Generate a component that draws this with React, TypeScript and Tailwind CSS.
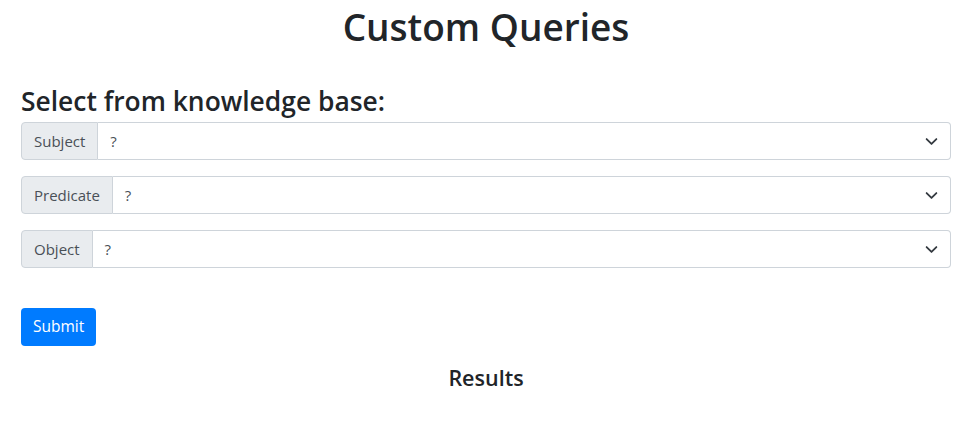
import React from "react";

const font = { fontFamily: '"Open Sans", "Noto Sans", sans-serif' };

function Chevron() {
  return (
    <svg width="13" height="13" viewBox="0 0 16 16" className="shrink-0">
      <path d="M2 5l6 6 6-6" fill="none" stroke="#343a40" strokeWidth="2.2" strokeLinecap="round" strokeLinejoin="round" />
    </svg>
  );
}

function Row({ label, last }: { label: string; last?: boolean }) {
  return (
    <div className={`flex h-[38px] w-full ${last ? "" : "mb-4"}`}>
      <div className="flex items-center px-3 bg-[#e9ecef] border border-[#ced4da] rounded-l-[4px] text-[#495057] text-[15px]">
        {label}
      </div>
      <div className="flex flex-1 items-center justify-between pl-3 pr-[12px] border border-l-0 border-[#ced4da] rounded-r-[4px] text-[#495057] text-[15px] bg-white">
        <span>?</span>
        <Chevron />
      </div>
    </div>
  );
}

export default function App() {
  return (
    <div className="bg-white min-h-[441px] pl-[21px] pr-[16px] text-[#212529]" style={font}>
      <h1 className="text-center text-[37px] font-semibold leading-[48px] pt-[3px]">Custom Queries</h1>
      <h3 className="text-[26.4px] font-semibold leading-[34px] mt-[33px] mb-[4px]">Select from knowledge base:</h3>
      <Row label="Subject" />
      <Row label="Predicate" />
      <Row label="Object" last />
      <button className="mt-10 h-[38px] px-3 bg-[#007bff] text-white text-[15.5px] rounded-[4px]">Submit</button>
      <h5 className="text-center text-[21.5px] font-semibold leading-6 mt-5">Results</h5>
    </div>
  );
}
